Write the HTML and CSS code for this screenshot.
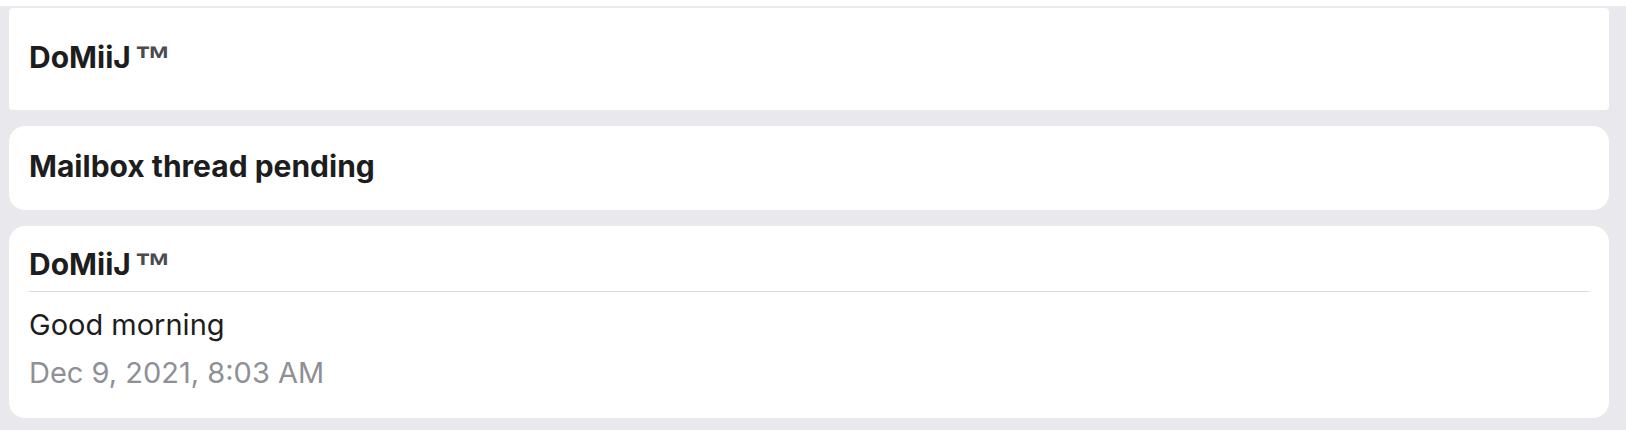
FILE: index.html
```html
<!DOCTYPE html>
<html lang="en">
<head>
<meta charset="utf-8">
<title>Mailbox thread</title>
<link rel="stylesheet" href="styles.css">
</head>
<body>
<div class="thread">
  <section class="card card-head">
    <h1 class="name">DoMiiJ<span class="tm">™</span></h1>
  </section>
  <section class="card card-status">
    <h2 class="status">Mailbox thread pending</h2>
  </section>
  <section class="card card-message">
    <div class="message-head">
      <span class="name">DoMiiJ<span class="tm">™</span></span>
    </div>
    <p class="message-body">Good morning</p>
    <p class="message-date">Dec 9, 2021, 8:03 AM</p>
  </section>
</div>
</body>
</html>
```

FILE: styles.css
```css
* { box-sizing: border-box; }

html, body {
  margin: 0;
  padding: 0;
  background: #ffffff;
}

body {
  font-family: Inter, "Noto Sans", "Liberation Sans", sans-serif;
  color: #1d1d20;
}

.thread {
  margin-top: 6px;
  background: #e9e9ed;
  padding: 2px 17px 12px 9px;
  display: flex;
  flex-direction: column;
  gap: 16px;
  min-height: 424px;
}

.card {
  background: #ffffff;
  border-radius: 16px;
  padding: 0 20px;
}

.card-head {
  height: 102px;
  border-radius: 4px;
  padding-top: 31px;
}

.card-status {
  height: 84px;
  padding-top: 22px;
}

.card-message {
  height: 192px;
  padding-top: 20px;
}

.name, .status {
  margin: 0;
  font-size: 30px;
  line-height: 36px;
  font-weight: 700;
  color: #1d1d20;
}

.tm {
  font-family: "Liberation Sans", Arial, sans-serif;
  font-size: 37px;
  line-height: 0;
  vertical-align: -4px;
  color: #4a4a4f;
  font-weight: 700;
  margin-left: 4px;
}

.message-head {
  padding-bottom: 9px;
  border-bottom: 1.5px solid #d9d9de;
}

.message-head .name {
  display: block;
}

.message-body {
  margin: 15px 0 0;
  font-size: 29px;
  line-height: 36px;
  font-weight: 400;
  color: #1d1d20;
}

.message-date {
  margin: 12px 0 0;
  font-size: 29px;
  line-height: 36px;
  font-weight: 400;
  color: #8e9096;
}
```
